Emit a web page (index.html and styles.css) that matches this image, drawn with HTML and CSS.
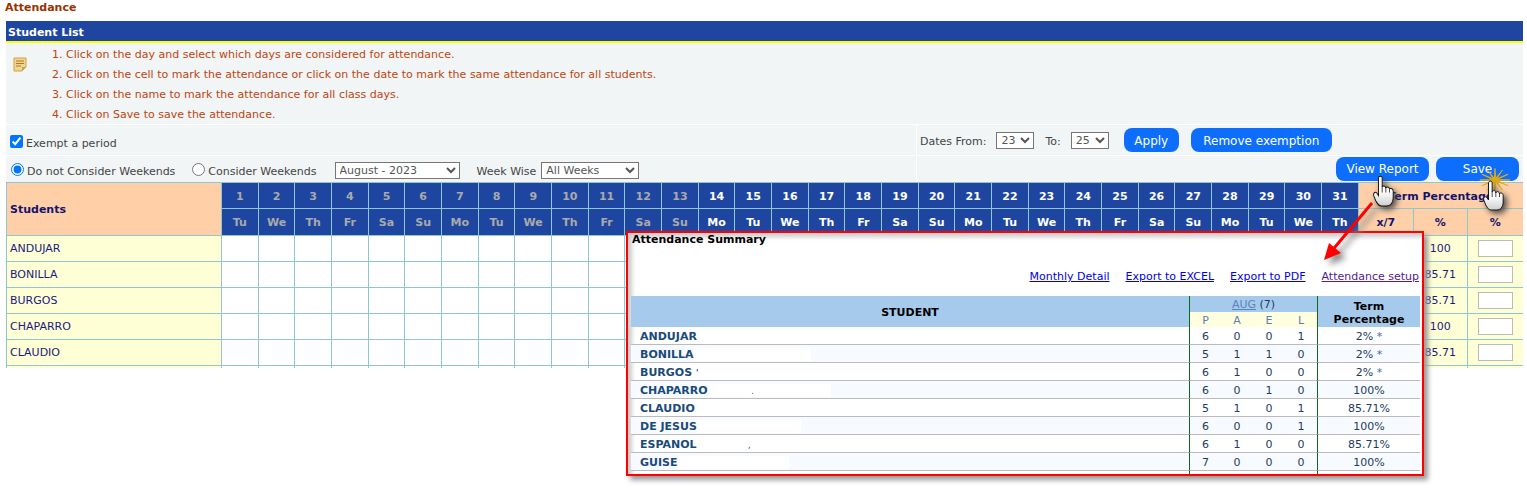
FILE: index.html
```html
<!DOCTYPE html>
<html lang="en">
<head>
    <meta charset="UTF-8">
    <title>Attendance</title>
    <link rel="stylesheet" href="styles.css">
</head>
<body>
    <svg class="defs" width="0" height="0">
        <defs>
            <linearGradient id="hand-fill" x1="0" y1="0" x2="0" y2="1">
                <stop offset="0.5" stop-color="#fff"/>
                <stop offset="1" stop-color="#cfcfcf"/>
            </linearGradient>
        </defs>
        <symbol id="hand" viewBox="0 0 24 31" preserveAspectRatio="none">
            <path d="M6 3C6 .5 10 .5 10 3V12C10 10 14 10 14 13C14 11 18 11 18 14C18 12.5 22 12.5 22 15.5V22C22 27 19 30 15 30H9C6 30 5 28 3 25L.8 20C0 17 3 15.5 4.5 18L6 20Z" fill="url(#hand-fill)" stroke="#111" stroke-width="1"/>
            <path d="M10 12V17M14 13V17M18 14V17" fill="none" stroke="#111" stroke-width=".8"/>
        </symbol>
    </svg>

    <h1 class="page-title">Attendance</h1>
    <div class="bar">Student List</div>

    <!-- Instructions -->
    <div class="notes">
        <svg class="note-icon" width="14" height="15" viewBox="0 0 14 15">
            <path d="M1 1H13V10L9 14H1Z" fill="#f3d58c" stroke="#c9a24e"/>
            <path d="M9 14V10H13Z" fill="#b9a57a"/>
            <path d="M3 4H11M3 6.500H11M3 9H8" stroke="#a8782a"/>
        </svg>
        <ol class="note-list">
            <li>1. Click on the day and select which days are considered for attendance.</li>
            <li>2. Click on the cell to mark the attendance or click on the date to mark the same attendance for all students.</li>
            <li>3. Click on the name to mark the attendance for all class days.</li>
            <li>4. Click on Save to save the attendance.</li>
        </ol>
    </div>

    <!-- Filters -->
    <div class="filters">
        <div class="filter-cell row-one">
            <label class="opt"><input type="checkbox" checked><span class="opt-text">Exempt a period</span></label>
        </div>
        <div class="filter-cell row-one">
            <span class="dates-label">Dates From:</span>
            <select class="sel-day"><option>23</option></select>
            <span class="to-label">To:</span>
            <select class="sel-day"><option>25</option></select>
            <button class="btn btn-apply">Apply</button>
            <button class="btn btn-remove">Remove exemption</button>
        </div>
        <div class="filter-cell row-two">
            <label class="opt"><input type="radio" name="wk" checked><span class="opt-text">Do not Consider Weekends</span></label>
            <label class="opt opt-second"><input type="radio" name="wk"><span class="opt-text">Consider Weekends</span></label>
            <select class="sel-month"><option>August - 2023</option></select>
            <span class="week-label">Week Wise</span>
            <select class="sel-week"><option>All Weeks</option></select>
        </div>
        <div class="filter-cell row-two actions">
            <button class="btn btn-report">View Report</button>
            <button class="btn btn-save">Save</button>
        </div>
    </div>

    <!-- Attendance grid -->
    <div class="grid-clip">
        <table class="grid">
            <colgroup>
                <col class="col-name">
                <col span="31" class="col-day">
                <col class="col-x"><col class="col-pct"><col class="col-input">
            </colgroup>
            <thead>
                <tr class="first">
                    <th rowspan="2" class="students-head">Students</th>
                    <th class="off">1</th><th class="off">2</th><th class="off">3</th><th class="off">4</th><th class="off">5</th><th class="off">6</th><th class="off">7</th><th class="off">8</th><th class="off">9</th><th class="off">10</th><th class="off">11</th><th class="off">12</th><th class="off">13</th>
                    <th>14</th><th>15</th><th>16</th><th>17</th><th>18</th><th>19</th><th>20</th><th>21</th><th>22</th><th>23</th><th>24</th><th>25</th><th>26</th><th>27</th><th>28</th><th>29</th><th>30</th><th>31</th>
                    <th colspan="3" class="term">Term Percentage</th>
                </tr>
                <tr class="second">
                    <th class="off">Tu</th><th class="off">We</th><th class="off">Th</th><th class="off">Fr</th><th class="off">Sa</th><th class="off">Su</th><th class="off">Mo</th><th class="off">Tu</th><th class="off">We</th><th class="off">Th</th><th class="off">Fr</th><th class="off">Sa</th><th class="off">Su</th>
                    <th>Mo</th><th>Tu</th><th>We</th><th>Th</th><th>Fr</th><th>Sa</th><th>Su</th><th>Mo</th><th>Tu</th><th>We</th><th>Th</th><th>Fr</th><th>Sa</th><th>Su</th><th>Mo</th><th>Tu</th><th>We</th><th>Th</th>
                    <th class="term">x/7</th><th class="term">%</th><th class="term">%</th>
                </tr>
            </thead>
            <tbody>
                <tr><td class="name">ANDUJAR</td><td></td><td></td><td></td><td></td><td></td><td></td><td></td><td></td><td></td><td></td><td></td><td></td><td></td><td></td><td></td><td></td><td></td><td></td><td></td><td></td><td></td><td></td><td></td><td></td><td></td><td></td><td></td><td></td><td></td><td></td><td></td><td class="pale"></td><td class="pale val">100</td><td class="pale val"><input class="pct-input"></td></tr>
                <tr><td class="name">BONILLA</td><td></td><td></td><td></td><td></td><td></td><td></td><td></td><td></td><td></td><td></td><td></td><td></td><td></td><td></td><td></td><td></td><td></td><td></td><td></td><td></td><td></td><td></td><td></td><td></td><td></td><td></td><td></td><td></td><td></td><td></td><td></td><td class="pale"></td><td class="pale val">85.71</td><td class="pale val"><input class="pct-input"></td></tr>
                <tr><td class="name">BURGOS</td><td></td><td></td><td></td><td></td><td></td><td></td><td></td><td></td><td></td><td></td><td></td><td></td><td></td><td></td><td></td><td></td><td></td><td></td><td></td><td></td><td></td><td></td><td></td><td></td><td></td><td></td><td></td><td></td><td></td><td></td><td></td><td class="pale"></td><td class="pale val">85.71</td><td class="pale val"><input class="pct-input"></td></tr>
                <tr><td class="name">CHAPARRO</td><td></td><td></td><td></td><td></td><td></td><td></td><td></td><td></td><td></td><td></td><td></td><td></td><td></td><td></td><td></td><td></td><td></td><td></td><td></td><td></td><td></td><td></td><td></td><td></td><td></td><td></td><td></td><td></td><td></td><td></td><td></td><td class="pale"></td><td class="pale val">100</td><td class="pale val"><input class="pct-input"></td></tr>
                <tr><td class="name">CLAUDIO</td><td></td><td></td><td></td><td></td><td></td><td></td><td></td><td></td><td></td><td></td><td></td><td></td><td></td><td></td><td></td><td></td><td></td><td></td><td></td><td></td><td></td><td></td><td></td><td></td><td></td><td></td><td></td><td></td><td></td><td></td><td></td><td class="pale"></td><td class="pale val">85.71</td><td class="pale val"><input class="pct-input"></td></tr>
                <tr><td class="name"></td><td></td><td></td><td></td><td></td><td></td><td></td><td></td><td></td><td></td><td></td><td></td><td></td><td></td><td></td><td></td><td></td><td></td><td></td><td></td><td></td><td></td><td></td><td></td><td></td><td></td><td></td><td></td><td></td><td></td><td></td><td></td><td class="pale"></td><td class="pale"></td><td class="pale"></td></tr>
            </tbody>
        </table>
    </div>

    <!-- Summary popup pasted over the grid -->
    <div class="summary">
        <div class="summary-title">Attendance Summary</div>
        <div class="summary-links">
            <a href="#">Monthly Detail</a>
            <a href="#">Export to EXCEL</a>
            <a href="#">Export to PDF</a>
            <a href="#" class="visited">Attendance setup</a>
        </div>
        <table class="report">
            <colgroup>
                <col class="r-name"><col span="4" class="r-num"><col class="r-term">
            </colgroup>
            <thead>
                <tr class="r-top">
                    <th rowspan="2" class="student-head">STUDENT</th>
                    <th colspan="4" class="month sep"><a href="#">AUG</a> (7)</th>
                    <th rowspan="2" class="sep term-head">Term<br>Percentage</th>
                </tr>
                <tr class="r-sub">
                    <th class="sep">P</th><th>A</th><th>E</th><th>L</th>
                </tr>
            </thead>
            <tbody>
                <tr><td class="who">ANDUJAR</td><td class="sep">6</td><td>0</td><td>0</td><td>1</td><td class="sep">2% <span class="star">*</span></td></tr>
                <tr class="alt"><td class="who">BONILLA<span class="redact w-bonilla"></span></td><td class="sep">5</td><td>1</td><td>1</td><td>0</td><td class="sep">2% <span class="star">*</span></td></tr>
                <tr><td class="who">BURGOS <span class="tick">'</span></td><td class="sep">6</td><td>1</td><td>0</td><td>0</td><td class="sep">2% <span class="star">*</span></td></tr>
                <tr class="alt"><td class="who">CHAPARRO<span class="redact w-chaparro"><span class="tick">.</span></span></td><td class="sep">6</td><td>0</td><td>1</td><td>0</td><td class="sep">100%</td></tr>
                <tr><td class="who">CLAUDIO</td><td class="sep">5</td><td>1</td><td>0</td><td>1</td><td class="sep">85.71%</td></tr>
                <tr class="alt"><td class="who">DE JESUS<span class="redact w-jesus"></span></td><td class="sep">6</td><td>0</td><td>0</td><td>1</td><td class="sep">100%</td></tr>
                <tr><td class="who">ESPANOL<span class="redact w-espanol"><span class="tick">,</span></span></td><td class="sep">6</td><td>1</td><td>0</td><td>0</td><td class="sep">85.71%</td></tr>
                <tr class="alt"><td class="who">GUISE<span class="redact w-guise"></span></td><td class="sep">7</td><td>0</td><td>0</td><td>0</td><td class="sep">100%</td></tr>
                <tr><td></td><td class="sep"></td><td></td><td></td><td></td><td class="sep"></td></tr>
            </tbody>
        </table>
    </div>

    <!-- Annotations -->
    <svg class="arrow" width="70" height="80" viewBox="0 0 70 80">
        <path d="M50 4L8 54" stroke="#f00" stroke-width="3" fill="none"/>
        <path d="M2 61L7 44L19 54Z" fill="#f00"/>
    </svg>
    <svg class="hand hand-report" width="22" height="32"><use href="#hand" width="22" height="32"/></svg>
    <svg class="burst" width="34" height="26" viewBox="0 0 36 36" preserveAspectRatio="none">
        <path d="M34 18L20.400 17.350L31.900 10L19.800 16.200L26 4.100L18.650 15.600L18 2L17.350 15.600L10 4.100L16.200 16.200L4.100 10L15.600 17.350L2 18L15.600 18.650L4.100 26L16.200 19.800L10 31.900L17.350 20.400L18 34L18.650 20.400L26 31.900L19.800 19.800L31.900 26L20.400 18.650Z" fill="#e6ae10" stroke="#e6ae10" stroke-width="1"/>
    </svg>
    <svg class="hand hand-save" width="22" height="31"><use href="#hand" width="22" height="31"/></svg>
</body>
</html>
```

FILE: styles.css
```css
* {
    box-sizing: border-box;
}

html, body {
    height: 490px;
    overflow: hidden;
}

body {
    margin: 0;
    padding: 0 4px 0 6px;
    position: relative;
    background-color: #fff;
    color: #444;
    font-family: "DejaVu Sans", Verdana, sans-serif;
    font-size: 11px;
}

.defs {
    position: absolute;
}

.page-title {
    margin: 0 0 0 -1px;
    height: 21px;
    padding-top: 1px;
    font-size: 11px;
    line-height: 13px;
    color: #993300;
}

.bar {
    height: 22px;
    padding: 1px 0 0 2px;
    background-color: #1e46a0;
    border-bottom: 2px solid #ff0;
    color: #fff;
    font-weight: bold;
    line-height: 21px;
}

/* Instructions */
.notes {
    display: flex;
    height: 81px;
    background-color: #f1f5f6;
}

.note-icon {
    margin: 14px 0 0 7px;
    flex: none;
}

.note-list {
    list-style: none;
    margin: 0;
    padding: 2px 0 0 25px;
    color: #c0450f;
    letter-spacing: .015px;
}

.note-list li {
    height: 20px;
    line-height: 20px;
}

/* Filters */
.filters {
    display: grid;
    grid-template-columns: 910px 1fr;
    column-gap: 1px;
    row-gap: 1px;
    margin-top: 1px;
}

.filter-cell {
    display: flex;
    align-items: center;
    background-color: #f1f5f6;
}

.row-one {
    height: 30px;
    padding-left: 3px;
}

.row-two {
    height: 26px;
    padding-left: 4px;
}

.opt {
    display: flex;
    align-items: center;
}

.row-one .opt {
    margin-top: 2px;
}

.opt input {
    width: 13px;
    height: 13px;
    margin: 0 3px 0 1px;
}

.opt-text {
    padding-top: 4px;
}

.opt-second {
    margin-left: 16px;
}

select {
    height: 17px;
    padding: 0;
    font-family: inherit;
    font-size: 11px;
    color: #555;
    background-color: #fff;
    border: 1px solid #767676;
}

.dates-label {
    padding-top: 2px;
}

.sel-day {
    width: 38px;
    margin-left: 10px;
}

.to-label {
    margin-left: 11px;
    padding-top: 2px;
}

.sel-month {
    width: 125px;
    margin: 2px 0 0 18px;
}

.week-label {
    margin: 0 5px 0 17px;
    padding-top: 4px;
}

.sel-week {
    width: 98px;
    margin-top: 2px;
}

.btn {
    height: 24px;
    padding: 0;
    border: none;
    border-radius: 8px;
    background-color: #0d6efd;
    color: #fff;
    font-family: inherit;
    font-size: 12px;
}

.btn-apply {
    width: 55px;
    margin-left: 15px;
    padding-top: 2px;
}

.btn-remove {
    width: 141px;
    margin-left: 12px;
    padding-top: 2px;
}

.actions {
    justify-content: flex-end;
    padding-right: 4px;
}

.btn-report {
    width: 93px;
}

.btn-save {
    width: 83px;
    margin-left: 7px;
}

/* Attendance grid */
.grid-clip {
    height: 186px;
    overflow: hidden;
}

.grid {
    width: 1517px;
    table-layout: fixed;
    border-collapse: collapse;
}

.col-name { width: 215px; }
.col-day { width: 36.68px; }
.col-x { width: 55px; }
.col-pct { width: 54px; }
.col-input { width: 56px; }

.grid th,
.grid td {
    border: 1px solid #8fc7d0;
    padding: 0;
    height: 26px;
    text-align: center;
}

.grid th {
    background-color: #1e46a0;
    color: #fff;
    font-weight: bold;
}

.grid .first th {
    padding-top: 2px;
}

.grid .second th {
    height: 27px;
}

.grid th.off {
    color: #aaa;
}

.grid th.students-head {
    padding: 0 0 0 3px;
    background-color: #ffd0a8;
    color: #14146e;
    text-align: left;
}

.grid th.term {
    background-color: #ffd0a8;
    color: #14146e;
}

.grid td.name {
    background-color: #ffffd5;
    color: #1a1a80;
    text-align: left;
    padding-left: 3px;
}

.grid td.pale {
    background-color: #ffffd5;
}

.grid td.val {
    color: #1a1a80;
}

.pct-input {
    display: block;
    width: 35px;
    height: 17px;
    margin: 0 auto;
    padding: 0;
    border: 1px solid #bbb;
    background-color: #fff;
}

/* Summary popup */
.summary {
    position: absolute;
    left: 626px;
    top: 231px;
    width: 798px;
    height: 245px;
    padding: 0 2px 0 3px;
    overflow: hidden;
    background-color: #fff;
    border: 2px solid #f00;
    box-shadow: 4px 4px 5px #999, inset 4px 4px 4px #ccc;
}

.summary-title {
    height: 18px;
    padding-left: 1px;
    color: #000;
    font-weight: bold;
    line-height: 13px;
}

.summary-links {
    display: flex;
    justify-content: flex-end;
    column-gap: 16px;
    height: 45px;
    padding: 19px 1px 0 0;
}

.summary-links a {
    color: #0000ee;
}

.summary-links a.visited {
    color: #551a8b;
}

.report {
    width: 789px;
    table-layout: fixed;
    border-collapse: separate;
    border-spacing: 0;
}

.r-name { width: 558px; }
.r-num { width: 32px; }
.r-term { width: 103px; }

.report th {
    padding: 0;
    background-color: #a6caec;
    color: #000;
    line-height: 13px;
}

.report th.student-head {
    padding-top: 2px;
}

.report .r-top th { height: 16px; }

.report .r-sub th {
    height: 15px;
    padding-top: 2px;
    background-color: #ffffe0;
    color: #5b7fb0;
    font-weight: normal;
}

.report th.month {
    color: #223a5e;
    font-weight: normal;
}

.report th.month a {
    color: #5b84b8;
}

.report th.term-head {
    padding-top: 3px;
}

.report td {
    height: 18px;
    padding: 2px 0 0;
    border-bottom: 1px solid #bbb;
    color: #223a5e;
    line-height: 13px;
    text-align: center;
}

.report .alt td {
    background-color: #f7fbff;
}

.report .sep {
    border-left: 1px solid #0a6b20;
}

.report td.who {
    padding-left: 9px;
    color: #1a4a7a;
    font-weight: bold;
    text-align: left;
    white-space: nowrap;
}

.star {
    color: #3a6ea8;
}

.tick {
    color: #1a3a9a;
    font-size: 8px;
}

/* white blocks hiding the first names */
.redact {
    display: inline-block;
    height: 13px;
    line-height: 13px;
    background-color: #fff;
    font-weight: normal;
}

.redact::before {
    content: "\00a0";
}

.w-bonilla { width: 117px; }
.w-chaparro { width: 123px; padding-left: 40px; }
.w-jesus { width: 104px; }
.w-espanol { width: 60px; padding-left: 48px; background-color: transparent; }
.w-guise { width: 111px; }

/* Annotations */
.arrow {
    position: absolute;
    left: 1322px;
    top: 199px;
    overflow: visible;
    filter: drop-shadow(5px 5px 3px #888);
}

.hand {
    position: absolute;
    filter: drop-shadow(3px 3px 3px #444);
}

.hand-report {
    left: 1373px;
    top: 175px;
}

.hand-save {
    left: 1483px;
    top: 180px;
}

.burst {
    position: absolute;
    left: 1478px;
    top: 167px;
}
```
